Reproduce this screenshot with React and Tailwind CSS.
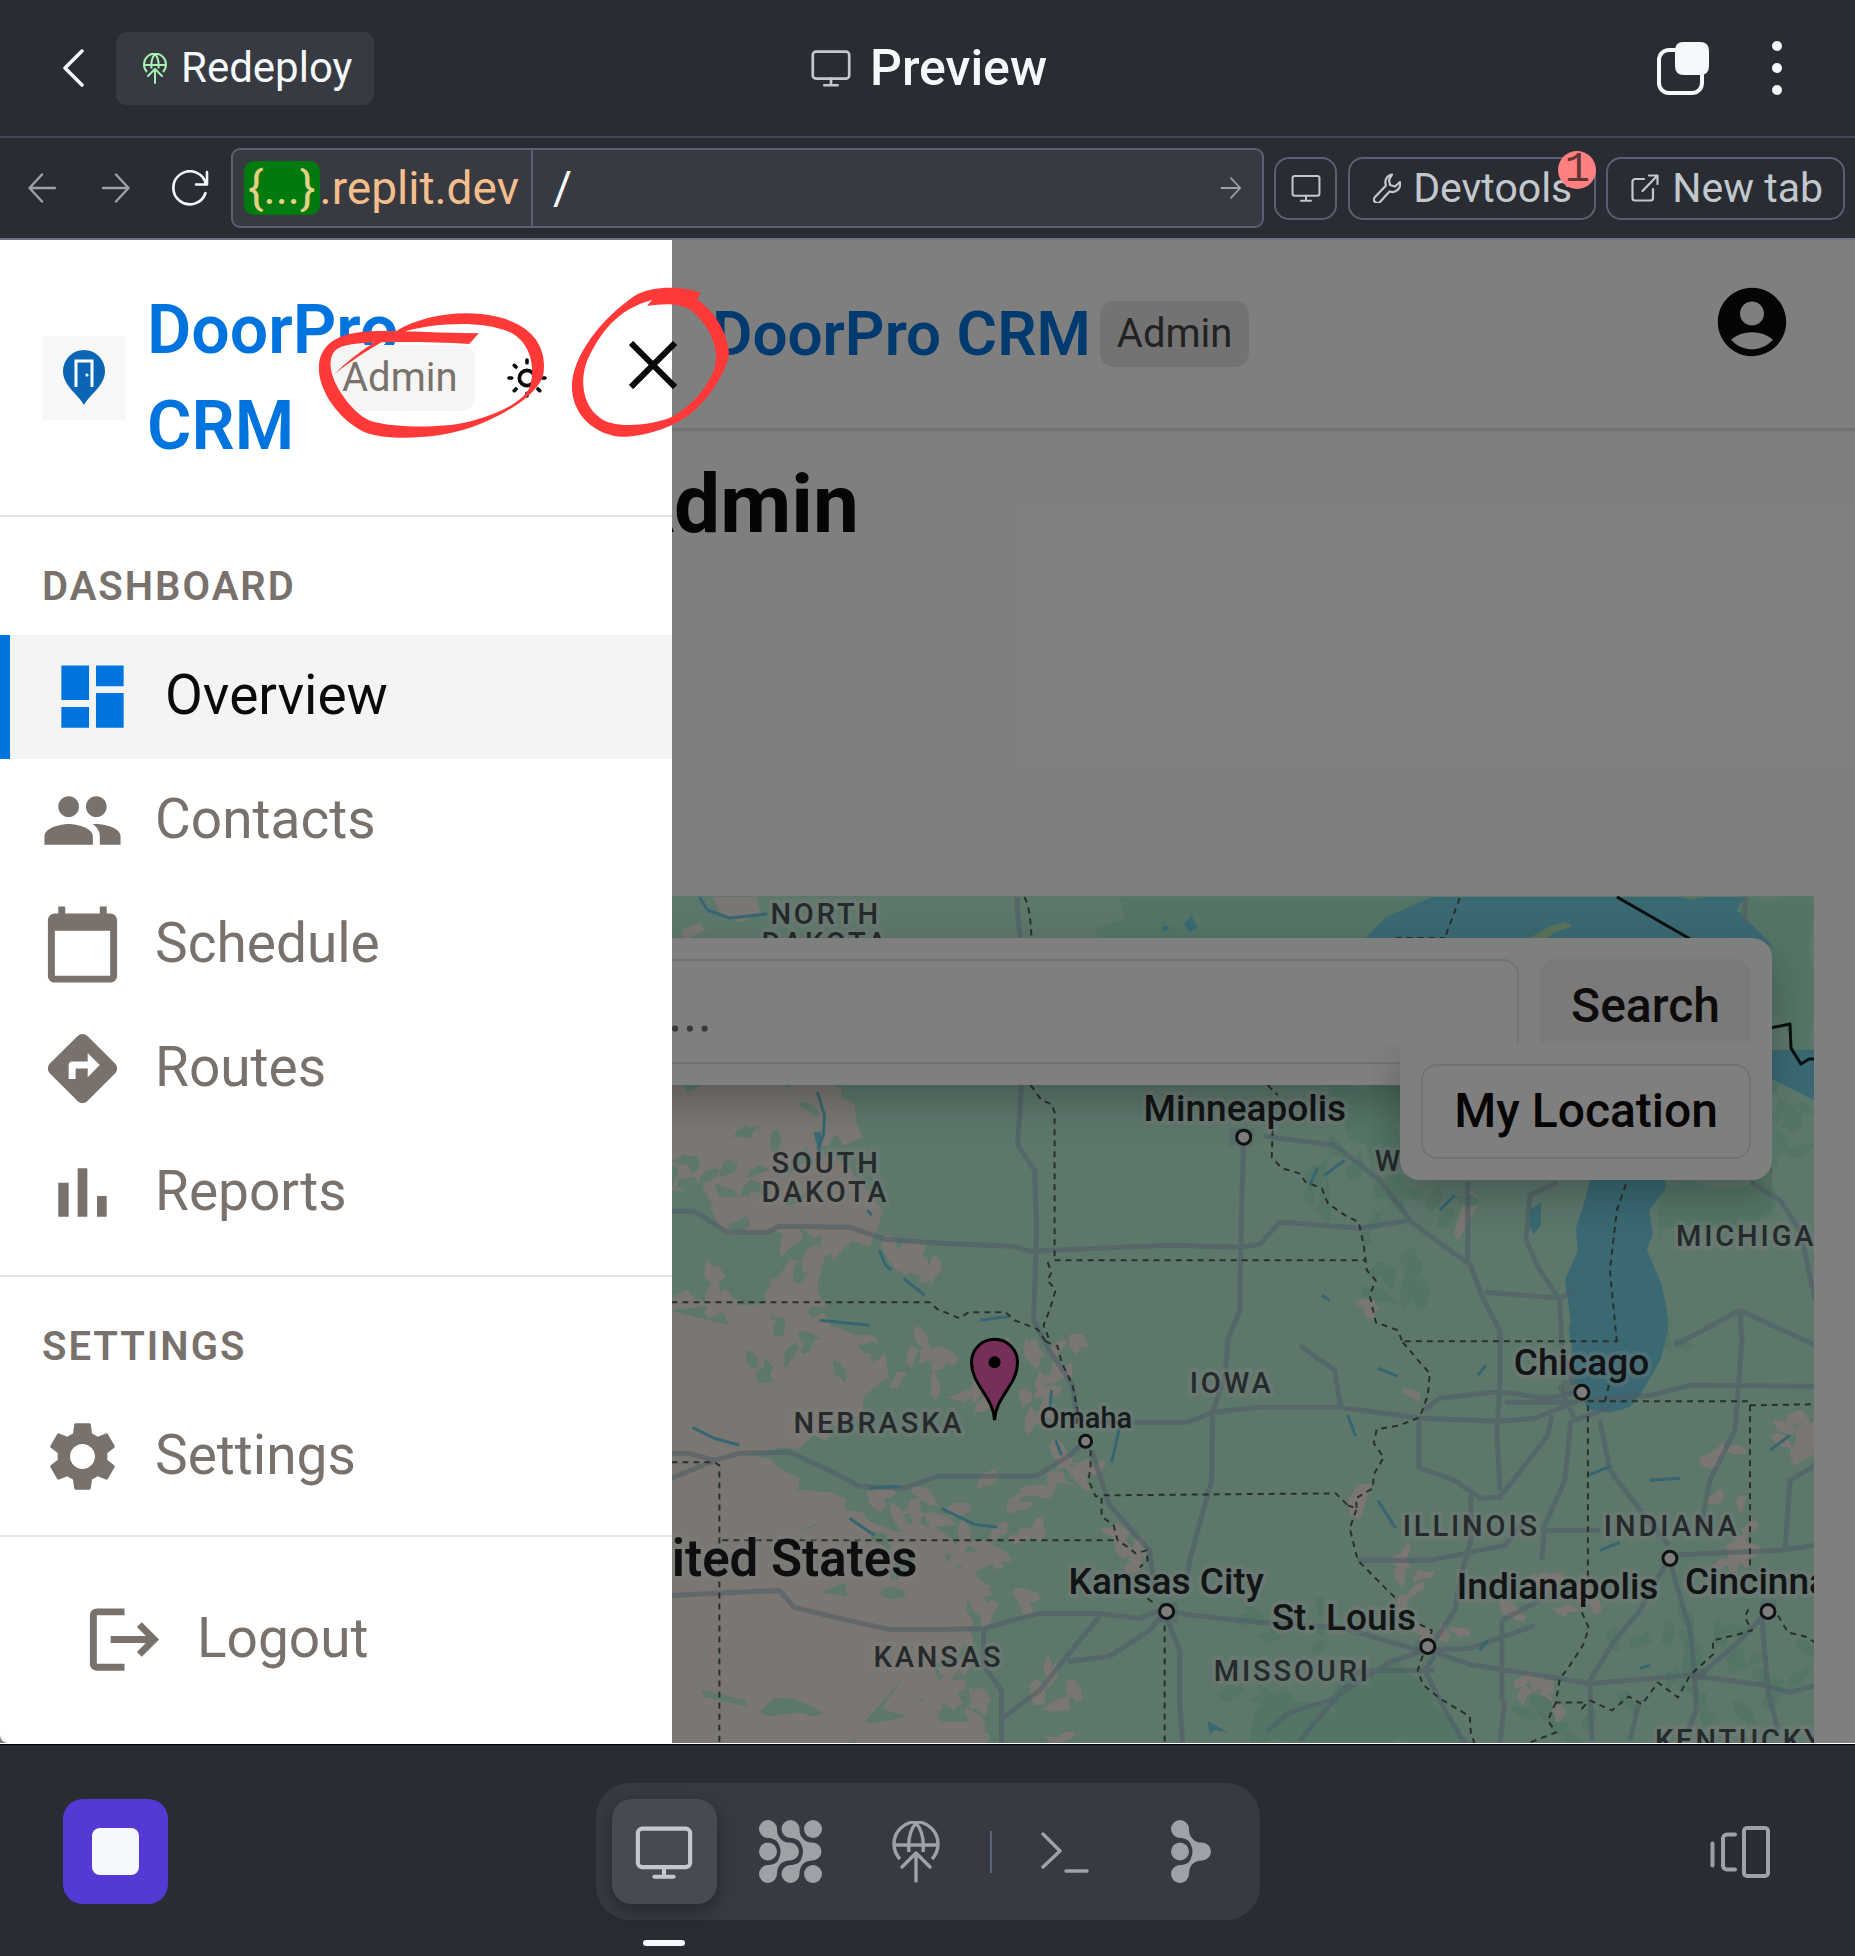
import React from "react";
import {
  MdDashboard,
  MdPeople,
  MdCalendarToday,
  MdDirections,
  MdSettings,
  MdLogout,
  MdAccountCircle,
} from "react-icons/md";

/* ---------- stroke icons of the editor chrome ---------- */

const line = {
  fill: "none",
  stroke: "currentColor",
  strokeLinecap: "round",
  strokeLinejoin: "round",
};

function Monitor({ className, weight = 1.4 }) {
  return (
    <svg viewBox="0 0 24 24" className={className} {...line} strokeWidth={weight}>
      <rect x="2.500" y="3.500" width="19" height="14" rx="1.6" />
      <path d="M12 17.500v3.500M8.500 21h7" />
    </svg>
  );
}

function GlobeUp({ className, weight = 3.4 }) {
  return (
    <svg viewBox="0 0 48 62" className={className} {...line} strokeWidth={weight} strokeLinecap="butt">
      <path d="M8 38a22 22 0 1 1 32 0M2 24h44M17 31c-1-10 0-21 7-29 7 8 8 19 7 29" />
      <path d="M24 60V34M10 46l14-14 14 14" strokeLinecap="round" />
    </svg>
  );
}

function Arrow({ className, flip }) {
  return (
    <svg viewBox="0 0 28 30" className={className} {...line} strokeWidth="2.4">
      {flip ? <path d="M27 15H1.500M14 1.500L1.500 15 14 28.500" /> : <path d="M1 15h25.500M14 1.500L26.500 15 14 28.500" />}
    </svg>
  );
}

function NodeGrid({ className }) {
  return (
    <svg viewBox="0 0 63 63" className={className} fill="currentColor">
      <path d="M9 0a9 9 0 0 1 9 9c0 6 2 9 7 12.500 2 1 4 1 6 1a9 9 0 0 1 0 18c-8 0-13 5-13 13.500A9 9 0 1 1 9 45c5 0 10-2 11-7 2-4 2-9 0-13-2-5-6-7-11-7A9 9 0 0 1 9 0z" />
      <path d="M31.500 0a9 9 0 0 1 9 9c0 6 2 9 7 12.500 2 1 4 1 6 1a9 9 0 0 1 0 18c-8 0-13 5-13 13.500a9 9 0 1 1-9-9c5 0 10-2 11-7 2-4 2-9 0-13-2-5-6-7-11-7a9 9 0 0 1 0-18z" />
      <circle cx="9" cy="31.500" r="9" />
      <circle cx="54" cy="9" r="9" />
      <circle cx="54" cy="54" r="9" />
    </svg>
  );
}

function NodeBranch({ className }) {
  return (
    <svg viewBox="0 0 41 63" className={className} fill="currentColor">
      <path d="M9 0a9 9 0 0 1 9 9c0 6 2 9 7 12.500 2 1 4 1 6 1a9 9 0 0 1 0 18c-8 0-13 5-13 13.500A9 9 0 1 1 9 45c5 0 10-2 11-7 2-4 2-9 0-13-2-5-6-7-11-7A9 9 0 0 1 9 0z" />
      <circle cx="9" cy="31.500" r="9" />
    </svg>
  );
}

function Bars({ className }) {
  return (
    <svg viewBox="0 0 24 24" className={className} fill="currentColor">
      <path d="M5 9.200h3V19H5zM10.600 5h2.800v14h-2.800zM16.200 13H19v6h-2.800z" />
    </svg>
  );
}

/* ---------- map ---------- */

const LAND = "#bbeed7";
const SAND = "#f4efe4";
const WOOD = "#a8e9cc";
const LAKE = "#74d2e6";

function random(seed) {
  let s = seed;
  return () => {
    s = (s * 16807) % 2147483647;
    return s / 2147483647;
  };
}

const toPath = (pts) => "M" + pts.map((p) => p.map(Math.round).join(" ")).join("L") + "Z";

// Breaks a polygon's edges into short uneven steps.
function rough(points, amp, seed) {
  const r = random(seed);
  const out = [];
  points.forEach((a, i) => {
    const b = points[(i + 1) % points.length];
    const n = Math.max(1, Math.round(Math.hypot(b[0] - a[0], b[1] - a[1]) / 14));
    for (let k = 0; k < n; k++) {
      const t = k / n;
      out.push([a[0] + (b[0] - a[0]) * t + (r() - 0.5) * amp, a[1] + (b[1] - a[1]) * t + (r() - 0.5) * amp]);
    }
  });
  return toPath(out);
}

// Small angular patches spread over an ellipse.
function patches(seed, cx, cy, rx, ry, count, size) {
  const r = random(seed);
  let d = "";
  for (let i = 0; i < count; i++) {
    const a = r() * 6.28;
    const q = Math.sqrt(r());
    const x = cx + Math.cos(a) * rx * q;
    const y = cy + Math.sin(a) * ry * q;
    const tilt = r() * 6.28;
    const pts = [];
    for (let k = 0; k < 8; k++) {
      const t = (k / 8) * 6.28;
      const m = size * (0.45 + r() * 0.8);
      const px = Math.cos(t) * m;
      const py = Math.sin(t) * m * 0.5;
      pts.push([x + px * Math.cos(tilt) - py * Math.sin(tilt), y + px * Math.sin(tilt) + py * Math.cos(tilt)]);
    }
    d += toPath(pts);
  }
  return d;
}

const sandWest = rough(
  [
    [640, 1085], [846, 1085], [850, 1110], [860, 1140], [828, 1150], [860, 1180], [890, 1215], [875, 1240], [790, 1230],
    [760, 1235], [720, 1226], [705, 1200], [680, 1190], [640, 1190],
  ],
  16, 31
);
const sandPlains = rough(
  [
    [640, 1305], [700, 1290], [760, 1302], [820, 1300], [870, 1340], [900, 1378], [870, 1395], [845, 1420], [805, 1450], [830, 1470],
    [845, 1500], [875, 1525], [925, 1525], [955, 1545], [985, 1560], [970, 1590], [955, 1610], [972, 1640], [940, 1665], [935, 1690],
    [905, 1700], [975, 1722], [990, 1750], [640, 1750],
  ],
  20, 77
);

const BORDERS = [
  "M1025 897C1031 910 1031 925 1032 938M1031 1085L1042 1100 1052 1104 1055 1112V1258",
  "M1055 1260H1367M1048 1262L1052 1272 1048 1280 1056 1290 1050 1310 1044 1325 1050 1340",
  "M672 1302H930L938 1309 960 1318 969 1312H1006L1015 1320 1038 1329 1046 1341",
  "M1046 1341L1058 1346 1062 1362 1073 1385 1078 1410 1077 1425M1091 1450V1466L1089 1480 1096 1496 1102 1496V1516L1114 1525 1118 1540 1130 1548 1136 1553 1147 1550 1148 1560 1140 1567M1148 1598L1156 1604",
  "M1104 1495L1336 1493 1348 1505",
  "M672 1462H715L720 1465V1742",
  "M723 1540H1116",
  "M1165 1625V1742",
  "M1268 1085L1278 1095M1273 1130L1272 1157 1282 1168 1299 1173 1306 1182 1322 1188 1328 1203 1345 1215 1359 1222 1364 1245 1367 1270 1376 1280 1370 1295 1376 1322 1398 1330 1403 1342",
  "M1405 1341H1617M1403 1342L1420 1362 1430 1373 1428 1395 1420 1417 1400 1425 1377 1429 1374 1443 1384 1457 1374 1474 1373 1488 1356 1498 1357 1508",
  "M1348 1505L1357 1508 1350 1528 1358 1560 1396 1598M1420 1624L1432 1630 1428 1646M1423 1655L1418 1670 1423 1684 1440 1698 1470 1716 1471 1732 1475 1744",
  "M1617 1342L1610 1270 1617 1210 1627 1181M1609 1385L1605 1401M1460 898L1445 938M1396 938H1445",
  "M1588 1401H1750L1751 1405 1815 1404M1588 1405V1577M1750 1405V1570",
  "M1582 1612L1589 1628 1583 1645 1568 1668 1560 1678 1556 1702 1582 1702 1582 1708 1590 1700 1612 1710 1629 1696 1642 1704 1658 1682 1678 1697 1690 1675 1713 1654V1640L1738 1634 1752 1630 1745 1617 1750 1605M1778 1615L1788 1632 1805 1636 1815 1642M1556 1702L1548 1720 1556 1732 1530 1742",
];

const ROADS = [
  "M672 1211L695 1211 728 1232 768 1232 780 1226 850 1227 885 1239 940 1243 1012 1246 1030 1251 1170 1245 1240 1247 1260 1244 1280 1222 1297 1223 1360 1228 1410 1220",
  "M1018 897C1017 915 1020 930 1021 938M1022 1085L1018 1145 1035 1170 1037 1230 1034 1320 1050 1350 1073 1385 1078 1420",
  "M1244 1140L1242 1205 1240 1310 1228 1340 1226 1370M1226 1372L1213 1412 1212 1480 1190 1560 1186 1590",
  "M672 1453H690L715 1460 740 1453 790 1452 830 1470 860 1486 905 1488 938 1476H1036L1070 1455 1086 1440M672 1478L715 1460",
  "M1100 1422H1188L1213 1412 1260 1407 1340 1407 1420 1418 1500 1421 1535 1418 1580 1400 1650 1395 1690 1385 1815 1386",
  "M672 1595L780 1590 795 1607 840 1618 890 1629 940 1629 985 1628 1012 1620 1040 1613H1100L1140 1618 1166 1608 1186 1614 1260 1622 1340 1627 1420 1650 1470 1648 1535 1625",
  "M984 1628V1665L1002 1690V1744M1002 1718L1040 1690 1080 1640 1100 1616M1068 1661L1110 1656 1150 1630 1166 1610",
  "M1166 1615L1180 1650V1700L1183 1744M1092 1450L1110 1505 1150 1550 1155 1590",
  "M1264 1136L1335 1145 1380 1180 1412 1222 1450 1250 1470 1264 1484 1300 1500 1330V1385L1497 1430 1500 1490",
  "M1468 1182V1260M1558 1182L1530 1195 1526 1240 1540 1270 1560 1300 1562 1350 1574 1385M1485 1292L1560 1298 1574 1290",
  "M1300 1345L1335 1370 1341 1407M1424 1410L1440 1398 1500 1391 1545 1398 1580 1392M1419 1420V1467L1455 1480 1480 1498 1500 1497 1525 1465 1548 1435 1552 1415",
  "M1571 1420L1565 1480 1545 1525 1542 1560M1541 1530H1600M1600 1420L1610 1470 1640 1510 1669 1545",
  "M1358 1560H1430L1470 1552 1505 1545 1525 1520M1471 1492V1540L1460 1580 1455 1610 1435 1640",
  "M1430 1650L1470 1664 1540 1675 1590 1683 1690 1675 1760 1684 1790 1692 1815 1685",
  "M1669 1558L1690 1630 1695 1675 1696 1710 1688 1730M1669 1558L1640 1610 1615 1640 1590 1680 1592 1740M1669 1555L1780 1550 1815 1545",
  "M1768 1611L1740 1640 1700 1675M1762 1620L1768 1690 1778 1730M1740 1310L1742 1340 1735 1430 1710 1480 1700 1530M1740 1310L1815 1345M1675 1345L1740 1310",
  "M1750 1182L1780 1200 1800 1230 1815 1300M1268 1730L1290 1712 1330 1700 1390 1662 1425 1650M1435 1655L1425 1670 1440 1700 1465 1744",
  "M1505 1700L1500 1744M1502 1620V1700M1540 1600L1502 1620M1745 897V925M1505 1402H1574M1815 1465L1790 1480 1785 1550",
  "M1435 1670H1360L1300 1740M1640 1700L1630 1740M1560 1385L1575 1420 1610 1407",
];

const RIVERS = [
  "M700 897L708 910 730 918 768 914M818 1092L825 1115 824 1135 818 1150M820 1135V1160M880 1250L886 1265 892 1270M904 1278L925 1295M868 1210L872 1215",
  "M693 1427L715 1438 740 1445M870 1488L900 1486M942 1508L975 1524 998 1527M850 1518L875 1535M1120 1427L1112 1462M1052 1390L1050 1410M1056 1440L1062 1455",
  "M1310 1185L1318 1167M1322 1295L1330 1300M1325 1175L1345 1160M1440 1210L1455 1195M1378 1368L1398 1376M1348 1415L1356 1436M1478 1375L1486 1365M1588 1475L1610 1466",
  "M1650 1480L1680 1478M1600 1550L1620 1542M1378 1500L1396 1528M1480 1650L1488 1640M1770 1450L1790 1435M1640 1668L1650 1665M980 1320L1010 1316M820 1320L870 1325",
];

const LABELS = [
  ["state", "NORTH", 771, 924], ["state", "DAKOTA", 762, 953], ["state", "SOUTH", 772, 1173], ["state", "DAKOTA", 762, 1202],
  ["state", "WISCONSIN", 1375, 1171], ["state", "MICHIGAN", 1676, 1246], ["state", "NEBRASKA", 794, 1433], ["state", "IOWA", 1190, 1393],
  ["state", "KANSAS", 874, 1667], ["state", "MISSOURI", 1214, 1681], ["state", "ILLINOIS", 1403, 1536], ["state", "INDIANA", 1604, 1536],
  ["state", "KENTUCKY", 1655, 1750],
  ["city", "Minneapolis", 1144, 1121], ["city", "Kansas City", 1069, 1594], ["city", "Chicago", 1514, 1375], ["city", "Indianapolis", 1457, 1599],
  ["city", "Cincinnati", 1685, 1594], ["city", "St. Louis", 1272, 1630], ["town", "Omaha", 1040, 1428],
];

const LABEL_STYLE = {
  state: "fill-[#4c5458] stroke-white/30 stroke-[8px] text-[29px] font-medium tracking-widest",
  city: "fill-[#26292c] stroke-white/30 stroke-[8px] text-[37px] font-medium",
  town: "fill-[#303438] stroke-white/30 stroke-[7px] text-[29px] font-medium",
};

const CITIES = [[1244, 1137, 7], [1086, 1441, 6], [1167, 1611, 7], [1582, 1392, 7], [1670, 1558, 7], [1768, 1611, 7], [1428, 1646, 7]];

function RegionMap() {
  return (
    <svg
      viewBox="42 896 1772 847"
      preserveAspectRatio="xMaxYMin slice"
      className="absolute inset-0 h-full w-full font-[Roboto,sans-serif]"
      role="img"
      aria-label="Map of the central United States"
    >
      <rect x="42" y="896" width="1772" height="900" fill={LAND} />
      <path d={sandWest + sandPlains} fill={SAND} />
      <g fill={LAND}>
        <path d={patches(11, 715, 1190, 50, 45, 15, 13) + patches(12, 790, 1150, 50, 50, 8, 13)} />
        <path d={patches(13, 820, 1350, 70, 45, 12, 12) + patches(14, 900, 1560, 60, 40, 5, 14)} />
        <path d={rough([[755, 1452], [800, 1450], [850, 1475], [950, 1470], [940, 1500], [860, 1500], [800, 1490], [798, 1510], [800, 1480]], 10, 5)} />
        <path d="M702 1689L748 1700 746 1706 704 1696zM760 1711L775 1697 795 1698 825 1712 815 1716 800 1712 768 1716zM865 1722L905 1675 882 1708 908 1716 880 1722zM820 1592L846 1582 848 1596z" />
        <path d="M672 1310L720 1304 730 1325 700 1318zM798 1332L808 1330 806 1342zM801 1530L820 1522 812 1528z" />
      </g>
      <g fill={SAND}>
        <path d={patches(21, 850, 1255, 75, 25, 11, 19) + patches(22, 745, 1290, 70, 20, 10, 19) + patches(23, 925, 1270, 35, 18, 3, 16)} />
        <path d={patches(24, 955, 1370, 60, 50, 17, 14) + patches(25, 1040, 1375, 30, 50, 11, 14) + patches(26, 1040, 1480, 65, 30, 13, 13)} />
        <path d={patches(27, 985, 1535, 55, 30, 10, 15) + patches(28, 985, 1600, 45, 55, 13, 15) + patches(29, 1050, 1735, 20, 40, 3, 12)} />
        <path d={patches(33, 960, 1700, 35, 38, 11, 16) + patches(34, 1125, 1550, 20, 32, 7, 15) + patches(35, 910, 1510, 60, 22, 7, 15)} />
        <path d={patches(36, 1055, 1690, 22, 22, 5, 15) + patches(37, 1400, 1575, 22, 30, 6, 13) + patches(38, 1535, 1600, 60, 22, 10, 13)} />
        <path d={patches(40, 1535, 1700, 25, 35, 6, 14) + patches(41, 1725, 1550, 35, 55, 9, 13)} />
        <path d={patches(42, 1785, 1435, 30, 22, 9, 16) + patches(43, 1720, 1450, 25, 15, 3, 13) + patches(44, 1360, 1310, 12, 10, 2, 13)} />
        <path d={patches(45, 1440, 1630, 20, 18, 4, 12) + patches(46, 1075, 1345, 10, 14, 2, 14)} />
        <path d="M713 897H757L762 914 740 922 720 912zM683 930L700 923 706 930 690 938H683zM1470 1190L1477 1195 1478 1205 1458 1240 1454 1232 1463 1205zM1348 1500L1358 1485 1372 1483 1360 1520 1350 1515zM1404 1387L1420 1392 1420 1402 1403 1393z" />
      </g>
      <g fill={WOOD}>
        <path d="M1120 897H1440L1380 938H1100L1095 928 1125 920z" />
        <path d={rough([[1745, 897], [1814, 897], [1814, 1060], [1790, 1050], [1770, 1000], [1760, 950], [1740, 930]], 12, 8)} />
        <path d={rough([[1330, 1085], [1405, 1085], [1401, 1175], [1370, 1160], [1345, 1120]], 14, 9)} />
        <path d={rough([[1665, 1182], [1760, 1182], [1780, 1210], [1735, 1230], [1700, 1225], [1655, 1235], [1655, 1210]], 18, 19)} />
        <path d={rough([[1265, 1690], [1330, 1705], [1350, 1675], [1400, 1665], [1440, 1710], [1468, 1745], [1250, 1745]], 16, 23)} />
        <path d={patches(51, 1360, 1190, 55, 55, 13, 16) + patches(52, 1395, 1290, 30, 40, 7, 18) + patches(53, 1440, 1200, 30, 40, 6, 15)} />
        <path d={patches(54, 1700, 1660, 110, 60, 24, 15) + patches(55, 1290, 1630, 60, 25, 7, 12) + patches(56, 1780, 1120, 30, 80, 12, 15)} />
        <path d={patches(57, 1670, 1345, 20, 30, 4, 12) + patches(58, 1540, 1720, 60, 20, 6, 14) + patches(59, 1230, 1700, 30, 12, 4, 9)} />
      </g>
      <g fill={LAKE}>
        <path d="M1366 938L1385 918 1432 897H1744L1737 910 1772 945H1366zM1770 1050H1814V1100L1770 1078z" />
        <path d="M1590 1178L1586 1197 1576 1228 1578 1250 1565 1280 1571 1320 1569 1330 1572 1345 1571 1372 1588 1409 1611 1412 1630 1407 1642 1392 1661 1359 1668 1330 1667 1310 1662 1285 1647 1250 1653 1233 1649 1210 1665 1190 1666 1178z" />
        <path d="M1530 1210L1541 1202V1225L1534 1234 1529 1225zM1184 924L1192 916 1198 928 1190 932zM1163 926h6v5h-6zM814 1132h8l-3 18zM1208 1720L1228 1732 1214 1729 1210 1735z" />
      </g>
      <path d="M1530 938L1548 927 1565 922 1573 926 1556 932 1545 940zM1682 897H1705L1690 900z" fill="#b5e5b8" />
      <g fill="none" strokeLinejoin="round">
        <path d={ROADS.join("")} className="stroke-[#a0b9cb]/60 stroke-5" />
        <path d="M1230 1128h24v18h-24zM1160 1602h18v20h-18zM1562 1380h14v14h-14zM1415 1640h22v14h-22zM1760 1600h16v18h-16zM1692 1668h14v12h-14z" className="fill-[#a0b9cb]/40" />
        <path d={RIVERS.join("")} className="stroke-[#6fcbe2] stroke-3" />
        <path d={BORDERS.join("")} className="stroke-[#50605c] stroke-[2px]" strokeDasharray="6 5" />
        <path d="M1617 897L1692 940M1770 1028L1790 1024 1791 1048 1801 1064 1809 1059H1815" className="stroke-[#10201f] stroke-[3px]" />
      </g>
      <g fill="#fafafa" stroke="#202325" strokeWidth="3">
        {CITIES.map(([x, y, r]) => (
          <circle key={x} cx={x} cy={y} r={r} />
        ))}
      </g>
      <g strokeLinejoin="round" className="[paint-order:stroke]">
        {LABELS.map(([kind, name, x, y]) => (
          <text key={name + y} x={x} y={y} className={LABEL_STYLE[kind]}>
            {name}
          </text>
        ))}
        <text x="918" y="1576" textAnchor="end" className="fill-[#1a1c1f] stroke-white/30 stroke-[8px] text-[51px] font-semibold">
          United States
        </text>
      </g>
      <path d="M995 1420C994 1396 972 1385 972 1362A23 23 0 0 1 1018 1362C1018 1385 996 1396 995 1420Z" fill="#ec5eb0" stroke="#000" strokeWidth="3" />
      <circle cx="995" cy="1362" r="6" />
    </svg>
  );
}

/* ---------- editor chrome ---------- */

function TopBar() {
  return (
    <header className="grid h-[138px] grid-cols-[1fr_auto_1fr] items-center border-b-2 border-[#434858] text-[#f5f9fc]">
      <div className="flex items-center gap-8 pl-[63px]">
        <button aria-label="Back" className="w-[21px]">
          <svg viewBox="0 0 21 38" {...line} strokeWidth="3.500">
            <path d="M19 2L2 19l17 17" />
          </svg>
        </button>
        <button className="flex h-[73px] items-center gap-[14px] rounded-[11px] bg-[#383a42] pr-[22px] pl-[27px] text-[42px] leading-none">
          <GlobeUp className="h-[31px] w-6 text-[#a6f0b4]" weight={4} />
          Redeploy
        </button>
      </div>
      <h1 className="flex items-center gap-4 text-[50px] leading-none font-medium">
        <Monitor className="size-[46px] text-[#c2c8cc]" />
        Preview
      </h1>
      <div className="flex items-center justify-end gap-[62px] pr-[73px]">
        <button aria-label="Tabs" className="w-[54px]">
          <svg viewBox="0 0 54 54">
            <rect x="3" y="9" width="43" height="43" rx="10" {...line} strokeWidth="4" />
            <path d="M27 1h17q9 0 9 9v15q0 9-9 9H28q-9 0-9-9V10q0-9 8-9z" fill="currentColor" />
          </svg>
        </button>
        <button aria-label="More" className="w-[10px]">
          <svg viewBox="0 0 10 54" fill="currentColor">
            <circle cx="5" cy="5" r="5" />
            <circle cx="5" cy="27" r="5" />
            <circle cx="5" cy="49" r="5" />
          </svg>
        </button>
      </div>
    </header>
  );
}

const pill = "flex h-[63px] items-center rounded-[15px] border-2 border-[#586072] text-[41px] leading-none text-[#c2c8cc]";

function AddressBar() {
  return (
    <nav className="flex h-[102px] items-center border-b-2 border-[#6f7282] pr-[10px] pl-7 text-[#9da2a6]">
      <button aria-label="Go back" className="mr-[46px]">
        <Arrow flip className="h-[30px] w-7" />
      </button>
      <button aria-label="Go forward" className="mr-10">
        <Arrow className="h-[30px] w-7" />
      </button>
      <button aria-label="Reload" className="mr-[21px] w-10 text-[#f5f9fc]">
        <svg viewBox="0 0 40 36" {...line} strokeWidth="2.600">
          <path d="M37 2v12.500H26M36 14.500A16.500 16.500 0 1 0 35.500 23" />
        </svg>
      </button>
      <div className="flex h-20 min-w-0 flex-1 items-center rounded-[9px] border-2 border-[#586072] bg-[#383a42] text-[46px] leading-none">
        <span className="ml-[11px] flex h-[54px] items-center rounded-[10px] bg-[#00790f] px-1 text-[#e3d184]">{"{...}"}</span>
        <span className="text-[#f4bf8c]">.replit.dev</span>
        <span className="ml-3 h-full w-[2px] bg-[#586072]" />
        <input aria-label="Path" defaultValue="/" className="h-full min-w-0 flex-1 bg-transparent pl-5 text-[#f5f9fc] outline-none" />
        <button aria-label="Open path" className="mr-5">
          <Arrow className="h-[22px] w-[22px]" />
        </button>
      </div>
      <button aria-label="Device" className={pill + " ml-[10px] w-[63px] justify-center"}>
        <Monitor className="size-[34px]" />
      </button>
      <button className={pill + " relative ml-[11px] pr-[22px] pl-[23px]"}>
        <svg viewBox="0 0 28 30" className="mr-3 w-7" {...line} strokeWidth="2.200">
          <path d="M19 1.500a8 8 0 0 0-6 11L2 24a3.500 3.500 0 0 0 5 5l9.500-10.500A8 8 0 0 0 27 9l-5 4.500-5-1.500-1-5z" />
        </svg>
        Devtools
        <span className="absolute -top-2 -right-[2px] flex size-[38px] items-center justify-center rounded-full bg-[#ff8080] font-['Liberation_Mono',monospace] text-[42px] text-[#633434]">
          1
        </span>
      </button>
      <button className={pill + " ml-[10px] pr-5 pl-[23px]"}>
        <svg viewBox="0 0 28 28" className="mr-[13px] w-7" {...line} strokeWidth="2.200">
          <path d="M13 5H4a2.500 2.500 0 0 0-2.500 2.500V24A2.500 2.500 0 0 0 4 26.500h15.500A2.500 2.500 0 0 0 22 24v-9M18 1.500h8.500V10M26 2L11.500 17" />
        </svg>
        New tab
      </button>
    </nav>
  );
}

const dockSlot = "flex size-[105px] items-center justify-center rounded-[20px]";

function Dock() {
  return (
    <footer className="grid h-[212px] grid-cols-[1fr_auto_1fr] items-start border-t border-black px-[63px] text-[#9da2a6]">
      <button aria-label="Stop" className="mt-[54px] flex size-[105px] items-center justify-center rounded-[20px] bg-[#5539d4]">
        <span className="size-[47px] rounded-lg bg-[#f5f9fc]" />
      </button>
      <div className="mt-[38px] flex h-[137px] items-center gap-[21px] rounded-[34px] bg-[#383a42] px-4">
        <button aria-label="Preview" className={dockSlot + " relative bg-[#474a53] text-[#c2c8cc] shadow-[0_6px_18px_rgba(0,0,0,0.35)]"}>
          <Monitor className="size-[66px]" weight={1.5} />
          <span className="absolute -bottom-[42px] h-[6px] w-[42px] rounded-full bg-[#f5f9fc]" />
        </button>
        <button aria-label="Apps" className={dockSlot}>
          <NodeGrid className="size-[63px]" />
        </button>
        <button aria-label="Deploy" className={dockSlot}>
          <GlobeUp className="h-[62px] w-12" />
        </button>
        <span className="h-[42px] w-[2px] bg-[#5b6377]" />
        <button aria-label="Shell" className={dockSlot}>
          <svg viewBox="0 0 48 42" className="w-12" {...line} strokeWidth="3.400">
            <path d="M2 3l17 17L2 36M25 40h21" />
          </svg>
        </button>
        <button aria-label="Agent" className={dockSlot}>
          <NodeBranch className="h-[63px] w-[41px]" />
        </button>
      </div>
      <button aria-label="Switch tabs" className="mt-[81px] mr-[22px] w-[60px] justify-self-end">
        <svg viewBox="0 0 60 52" {...line} strokeWidth="4">
          <rect x="34" y="2" width="24" height="48" rx="3" />
          <path d="M25 8.500H17a4 4 0 0 0-4 4v27a4 4 0 0 0 4 4h8M2.500 17.500v22" />
        </svg>
      </button>
    </footer>
  );
}

/* ---------- previewed page ---------- */

function CrmPage() {
  return (
    <div className="flex h-full flex-col bg-white">
      <header className="flex h-[190px] shrink-0 items-start justify-between border-b-2 border-[#e6e6e6] pt-[41px] pr-[62px] pl-[712px] shadow-sm">
        <div className="mt-5 flex items-center gap-[9px]">
          <span className="text-[62px] leading-[66px] font-semibold text-[#0074de]">DoorPro CRM</span>
          <span className="rounded-[14px] bg-[#e7e7e7] px-[17px] text-[40px] leading-[66px] text-[#444]">Admin</span>
        </div>
        <button aria-label="Account">
          <MdAccountCircle className="size-[82px] text-[#0c0a09]" />
        </button>
      </header>
      <h2 className="mt-[24px] pl-[619px] text-[82px] leading-[100px] font-bold text-[#0c0a09]">Admin</h2>
      <div className="relative mx-[41px] mt-auto h-[847px] overflow-hidden">
        <RegionMap />
        <div className="relative m-[42px]">
          <div className="flex items-start gap-[21px] rounded-[20px] bg-white p-[21px] shadow-[0_16px_40px_rgba(0,0,0,0.25)]">
            <input
              aria-label="Search the map"
              placeholder="..."
              className="h-[105px] min-w-0 flex-1 rounded-[16px] border-2 border-[#e4e4e2] pl-[562px] text-[56px] text-[#0c0a09] outline-none placeholder:text-[#78716c]"
            />
            <button className="h-[105px] rounded-[16px] bg-[#f5f5f4] px-[31px] text-[48px] leading-none font-medium text-[#1c1917]">
              <span className="mb-3 block">Search</span>
            </button>
          </div>
          <div className="absolute top-[105px] right-0 rounded-[20px] rounded-t-none bg-white p-[21px] shadow-[0_16px_40px_rgba(0,0,0,0.25)] [clip-path:inset(0_0_-80px_-30px)]">
            <button className="h-[95px] rounded-[16px] border-2 border-[#e4e4e2] px-[31px] pb-[2px] text-[48px] leading-none font-medium text-[#0c0a09]">
              My Location
            </button>
          </div>
        </div>
      </div>
    </div>
  );
}

function NavItem({ icon: Icon, active, children }) {
  return (
    <a
      href="#"
      aria-current={active ? "page" : undefined}
      className={
        active
          ? "flex h-[124px] items-center gap-[31px] border-l-[10px] border-[#0074de] bg-[#f4f5f3] pb-[2px] pl-[41px] text-[55px] leading-none text-[#0c0a09]"
          : "flex h-[124px] items-center gap-[31px] pb-[2px] pl-[41px] text-[55px] leading-none text-[#78716c]"
      }
    >
      <Icon className={active ? "size-[83px] text-[#0074de]" : "size-[83px]"} />
      <span className="pb-[2px]">{children}</span>
    </a>
  );
}

const sectionTitle = "px-[42px] text-[40px] leading-[56px] font-semibold tracking-wider text-[#78716c]";

function Drawer() {
  return (
    <aside className="absolute inset-y-0 left-0 flex w-[672px] flex-col rounded-bl-lg bg-white">
      <div className="relative flex h-[277px] items-center border-b-2 border-[#e7e5e4] pl-[42px]">
        <svg viewBox="0 0 84 84" className="size-[84px] shrink-0 bg-[#f8f8f7]">
          <path d="M42 69C36 58 21 50 21 35A21 21 0 0 1 63 35C63 50 48 58 42 69Z" fill="#0a66b4" />
          <path d="M34 51V25H50V51" fill="none" stroke="#fff" strokeWidth="3" />
          <circle cx="45" cy="39" r="1.600" fill="#fff" />
        </svg>
        <span className="ml-[21px] w-[178px] shrink-0 text-[68px] leading-[96px] font-semibold text-[#0074de]">DoorPro CRM</span>
        <span className="rounded-[14px] bg-[#f5f5f4] px-[17px] text-[40px] leading-[66px] text-[#78716c]">Admin</span>
        <button aria-label="Toggle theme" className="ml-8 w-10 text-[#0c0a09]">
          <svg viewBox="0 0 24 24" {...line} strokeWidth="2.200">
            <circle cx="12" cy="12" r="4.600" />
            <path d="M12 1.200v1.600M12 21.200v1.600M1.200 12h1.600M21.200 12h1.600M4.400 4.400l1 1M18.600 18.600l1 1M4.400 19.600l1-1M18.600 5.400l1-1" />
          </svg>
        </button>
        <button aria-label="Close menu" className="absolute top-[101px] -right-[5px] w-12 text-[#0c0a09]">
          <svg viewBox="0 0 48 48" {...line} strokeWidth="6" strokeLinecap="butt">
            <path d="M2 2l44 44M46 2L2 46" />
          </svg>
        </button>
      </div>
      <nav className="border-b-2 border-[#e7e5e4] pt-[42px] pb-5">
        <h3 className={sectionTitle + " mb-5"}>DASHBOARD</h3>
        <NavItem icon={MdDashboard} active>Overview</NavItem>
        <NavItem icon={MdPeople}>Contacts</NavItem>
        <NavItem icon={MdCalendarToday}>Schedule</NavItem>
        <NavItem icon={MdDirections}>Routes</NavItem>
        <NavItem icon={Bars}>Reports</NavItem>
      </nav>
      <nav className="border-b-2 border-[#e7e5e4] pt-[42px] pb-4">
        <h3 className={sectionTitle + " mb-5"}>SETTINGS</h3>
        <NavItem icon={MdSettings}>Settings</NavItem>
      </nav>
      <button className="mt-10 flex h-[124px] items-center gap-[31px] pl-[83px] text-[55px] leading-none text-[#78716c]">
        <MdLogout className="size-[83px]" />
        <span className="pb-[2px]">Logout</span>
      </button>
    </aside>
  );
}

function MarkerCircles() {
  return (
    <svg viewBox="0 0 760 300" className="pointer-events-none absolute top-0 left-0 w-[760px]" aria-hidden="true">
      <g transform="scale(.4847 .3333)" fill="#ff3838">
        <path d="M690 402C740 330 790 290 815 275C870 225 960 205 1030 232C1110 262 1130 340 1120 410C1100 480 1020 540 960 568C900 595 800 605 750 575C700 540 655 450 658 378C660 320 690 285 745 276C790 268 880 278 988 280L968 312C900 306 820 305 760 308C700 312 682 325 682 375C682 430 730 530 770 545C820 565 930 565 980 540C1030 520 1090 480 1095 430C1105 370 1090 300 1050 275C990 240 900 250 840 272C800 290 740 345 690 402Z" />
        <path
          fillRule="evenodd"
          d="M1445 158C1410 140 1350 135 1312 165C1240 235 1180 350 1180 440C1180 510 1215 580 1280 590C1330 592 1380 560 1400 545C1450 510 1500 400 1504 340C1500 270 1470 210 1438 178ZM1335 198C1370 190 1400 188 1425 210C1460 250 1485 320 1475 380C1465 430 1430 500 1380 535C1330 560 1260 565 1235 530C1200 490 1195 410 1215 350C1240 280 1270 210 1345 180Z"
        />
      </g>
    </svg>
  );
}

export default function App() {
  return (
    <div className="flex min-h-screen flex-col bg-[#2a2c34] font-[Roboto,sans-serif]">
      <TopBar />
      <AddressBar />
      <main className="relative flex-1 border-b border-white">
        <div className="absolute inset-0 overflow-hidden">
          <CrmPage />
          <div className="absolute inset-0 bg-black/50" />
        </div>
        <Drawer />
        <MarkerCircles />
      </main>
      <Dock />
    </div>
  );
}
